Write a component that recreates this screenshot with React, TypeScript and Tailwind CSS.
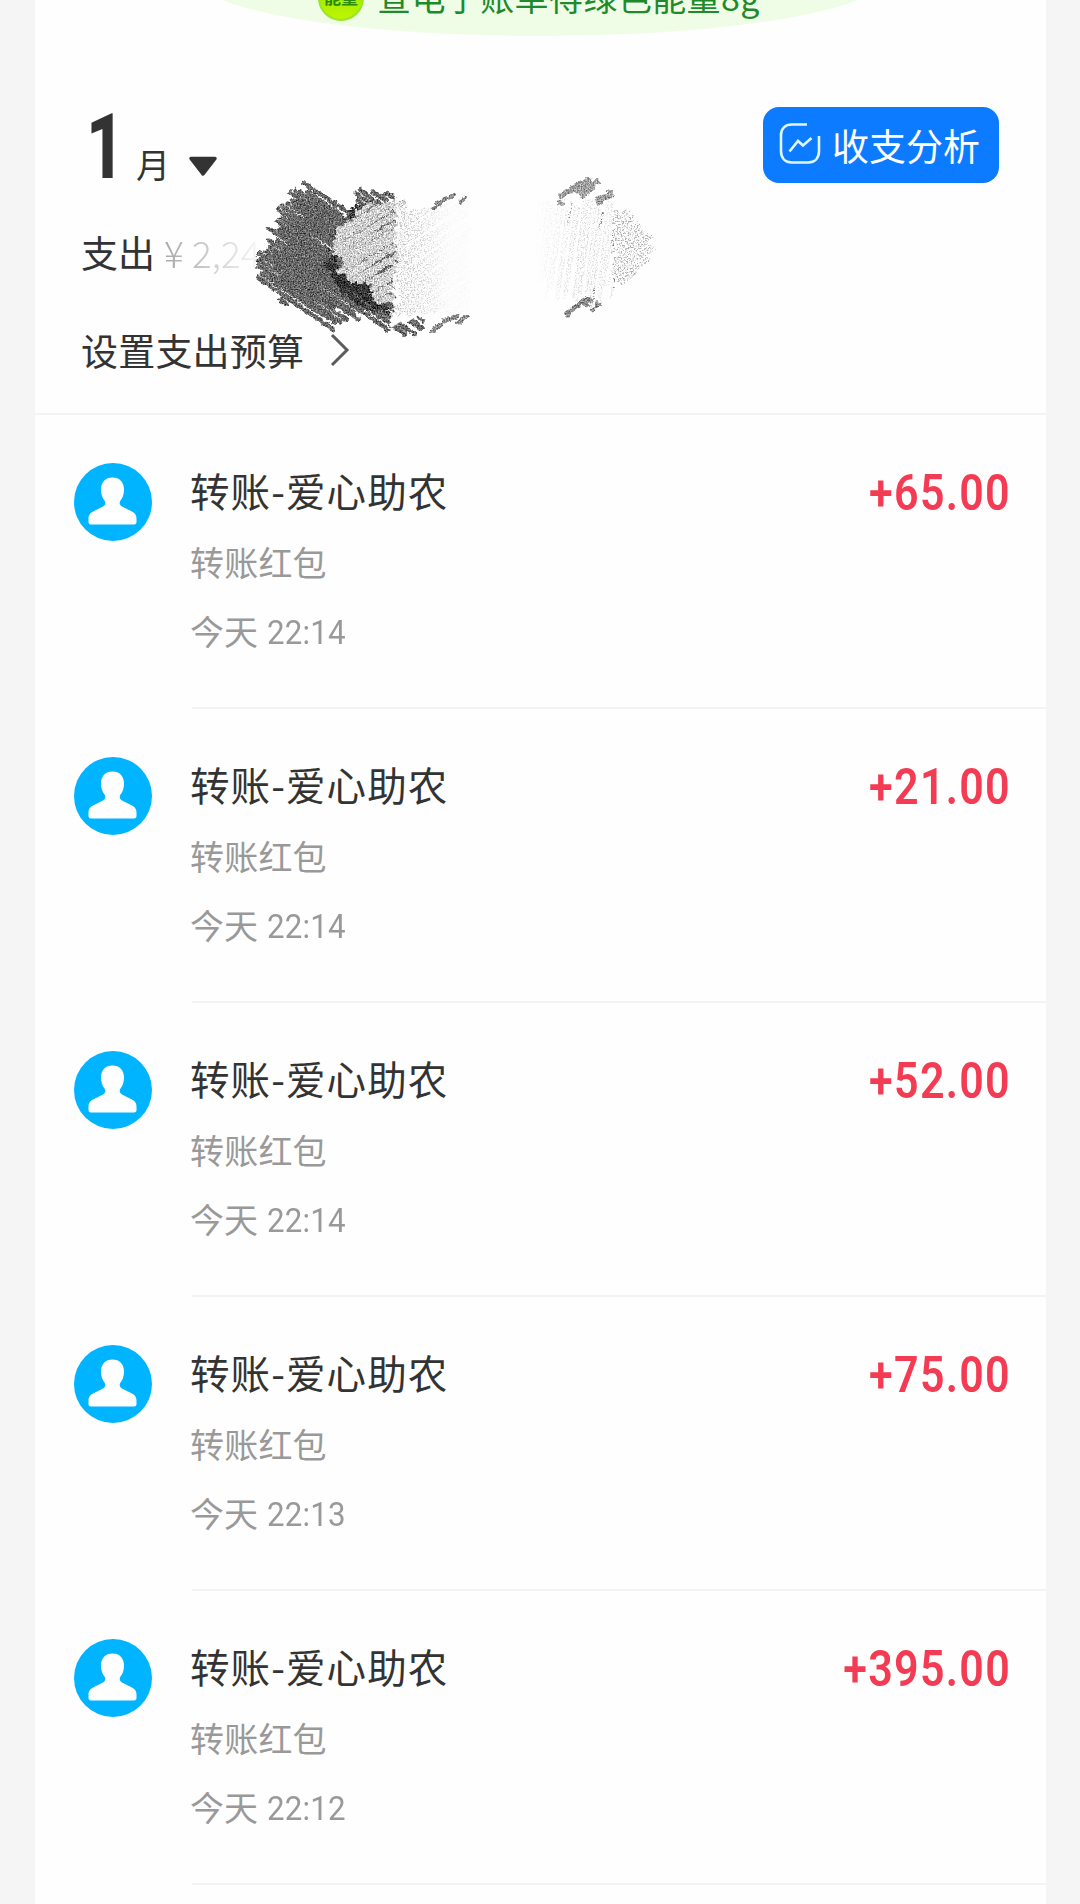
type Point = [number, number];

const bills = [
    { id: 1, title: "转账-爱心助农", kind: "转账红包", time: "22:14", amount: "+65.00" },
    { id: 2, title: "转账-爱心助农", kind: "转账红包", time: "22:14", amount: "+21.00" },
    { id: 3, title: "转账-爱心助农", kind: "转账红包", time: "22:14", amount: "+52.00" },
    { id: 4, title: "转账-爱心助农", kind: "转账红包", time: "22:13", amount: "+75.00" },
    { id: 5, title: "转账-爱心助农", kind: "转账红包", time: "22:12", amount: "+395.00" },
];

const random = (seed: number) => () => {
    seed = (seed * 16807) % 2147483647;
    return seed / 2147483647;
};

// fills a polygon with rough parallel strokes at the given angle
const hatch = (points: Point[], angle: number, gap: number, rough: number, seed: number) => {
    const rnd = random(seed * 7919);
    const a = (angle * Math.PI) / 180;
    const cos = Math.cos(a);
    const sin = Math.sin(a);
    const turned = points.map(([x, y]): Point => [x * cos + y * sin, y * cos - x * sin]);
    const ys = turned.map((p) => p[1]);
    let d = "";
    for (let v = Math.min(...ys) + 1; v < Math.max(...ys); v += gap) {
        const hits: number[] = [];
        turned.forEach((p, i) => {
            const q = turned[(i + 1) % turned.length];
            if (p[1] > v !== q[1] > v) {
                hits.push(p[0] + ((v - p[1]) / (q[1] - p[1])) * (q[0] - p[0]));
            }
        });
        hits.sort((m, n) => m - n);
        for (let i = 0; i + 1 < hits.length; i += 2) {
            const from = hits[i] + (rnd() - 0.3) * rough;
            const to = hits[i + 1] - (rnd() - 0.3) * rough;
            if (to <= from) continue;
            const w = v + (rnd() - 0.5) * 5;
            const line = [from * cos - v * sin, from * sin + v * cos, to * cos - w * sin, to * sin + w * cos];
            const [x1, y1, x2, y2] = line.map((n) => n.toFixed(1));
            d += `M${x1} ${y1}L${x2} ${y2}`;
        }
    }
    return d;
};

const darkArea: Point[] = [
    [306, 185], [322, 189], [350, 209], [356, 206], [354, 197], [374, 187], [390, 196], [400, 230],
    [410, 300], [425, 318], [420, 330], [404, 336], [378, 323], [362, 311], [350, 326], [330, 328],
    [290, 306], [257, 281], [256, 267], [262, 251], [271, 230], [281, 207], [290, 195],
];
const darkCore: Point[] = [
    [300, 203], [318, 204], [345, 222], [380, 205], [395, 240], [400, 310], [375, 312], [350, 305],
    [325, 308], [285, 286], [276, 268], [282, 235],
];
const shadeArea: Point[] = [
    [345, 212], [366, 202], [372, 202], [350, 224], [336, 243], [334, 262], [350, 280],
    [376, 290], [388, 305], [388, 316], [362, 308], [338, 288], [324, 262], [336, 236],
];
const lightArea: Point[] = [
    [388, 197], [402, 203], [400, 310], [388, 324], [390, 311], [371, 300], [370, 288], [356, 284],
    [340, 273], [337, 262], [327, 256], [334, 236], [345, 222], [365, 208],
];
const whiteArea: Point[] = [
    [396, 202], [416, 211], [438, 205], [458, 192], [470, 200], [470, 310], [440, 318], [420, 316],
    [405, 321], [390, 328], [393, 310],
];
const whiteGrain: Point[] = [
    [396, 202], [416, 211], [436, 204], [452, 196], [468, 204], [470, 310], [455, 322], [440, 312],
    [418, 318], [396, 315],
];
const midArea: Point[] = [[530, 207], [560, 200], [590, 193], [612, 205], [614, 292], [590, 307], [562, 297], [535, 290]];
const rightArea: Point[] = [
    [612, 208], [630, 209], [637, 224], [645, 225], [655, 245], [653, 260], [635, 276], [613, 288],
];

const Scribble = () => (
    <svg
        className="pointer-events-none absolute top-[165px] left-[165px]"
        width="460"
        height="180"
        viewBox="200 165 460 180"
        fill="none"
    >
        <defs>
            <filter id="grain" x="200" y="165" width="460" height="180" filterUnits="userSpaceOnUse" colorInterpolationFilters="sRGB">
                <feTurbulence type="fractalNoise" baseFrequency="0.75" numOctaves="2" seed="4" result="noise" />
                <feColorMatrix in="noise" values="1.2 0 0 0 -0.1  1.2 0 0 0 -0.1  1.2 0 0 0 -0.1  0 0 0 0 1" result="grey" />
                <feTurbulence type="fractalNoise" baseFrequency="0.2" numOctaves="3" seed="2" result="waves" />
                <feDisplacementMap in="SourceGraphic" in2="waves" scale="6" xChannelSelector="R" yChannelSelector="G" result="rough" />
                <feComposite in="rough" in2="grey" operator="arithmetic" k2="1" k3="0.8" k4="-0.4" result="mixed" />
                <feComposite in="mixed" in2="rough" operator="in" />
            </filter>
            <filter id="dust" x="200" y="165" width="460" height="180" filterUnits="userSpaceOnUse" colorInterpolationFilters="sRGB">
                <feTurbulence type="fractalNoise" baseFrequency="0.7" numOctaves="2" seed="9" result="noise" />
                <feColorMatrix in="noise" values="0 0 0 0 0  0 0 0 0 0  0 0 0 0 0  0 0 0 5 -2.4" result="specks" />
                <feComposite in="SourceGraphic" in2="specks" operator="in" />
            </filter>
            <linearGradient id="fadeRight" x1="396" x2="450" y1="0" y2="0" gradientUnits="userSpaceOnUse">
                <stop offset="0" stopColor="#b8b8b8" />
                <stop offset="0.6" stopColor="#b8b8b8" stopOpacity="0.5" />
                <stop offset="1" stopColor="#b8b8b8" stopOpacity="0.08" />
            </linearGradient>
            <linearGradient id="fadeLeft" x1="535" x2="612" y1="0" y2="0" gradientUnits="userSpaceOnUse">
                <stop offset="0" stopColor="#c4c4c4" stopOpacity="0.02" />
                <stop offset="0.6" stopColor="#c4c4c4" stopOpacity="0.7" />
                <stop offset="1" stopColor="#c4c4c4" stopOpacity="0.5" />
            </linearGradient>
        </defs>
        <g filter="url(#grain)">
            <path d={hatch(darkCore, 34, 3.2, 18, 3)} stroke="#5c5c5c" strokeWidth="3.6" strokeLinecap="round" />
            <path d={hatch(darkArea, 34, 5.2, 16, 11)} stroke="#686868" strokeWidth="4.6" strokeLinecap="round" />
            <path d={hatch(shadeArea, 38, 3, 10, 5)} stroke="#353535" strokeWidth="3.4" />
            <path d={hatch(lightArea, -30, 4.6, 15, 21)} stroke="#d2d2d2" strokeWidth="4.6" />
        </g>
        <path d={hatch(whiteArea, -32, 3.6, 6, 8)} stroke="#fdfdfd" strokeWidth="4.4" />
        <g filter="url(#dust)">
            <path d={hatch(whiteGrain, -34, 3.6, 9, 31)} stroke="url(#fadeRight)" strokeWidth="3.2" />
            <path d={hatch(midArea, 97, 4, 22, 17)} stroke="url(#fadeLeft)" strokeWidth="3" />
            <path d={hatch(rightArea, -32, 4, 8, 15)} stroke="#acacac" strokeWidth="4" />
            <path d="M572 201l-4 22M603 212l-4 18M613 230v16M614 278v10M594 288v14" stroke="#6d6d6d" strokeWidth="2" />
        </g>
        <g filter="url(#grain)" stroke="#8a8a8a" strokeLinecap="round">
            <path d="M434 208l10-8 10-5M460 202l6-5M433 331l10-9 15-6M458 323l9-7" strokeWidth="4" />
            <path d="M560 196l16-9 12-6M577 191l20-9M582 195l10-6M598 199l8-2M600 202l11-9M561 203l1 2" strokeWidth="5.5" stroke="#a0a0a0" />
            <path d="M567 315l10-9 11-8M585 304l5-3M592 310l6-5" strokeWidth="4.5" />
        </g>
    </svg>
);

const Avatar = () => (
    <svg className="shrink-0" width="80" height="80" viewBox="0 0 80 80">
        <circle cx="40" cy="40" r="39" fill="#00b4ff" />
        <path
            fill="#fff"
            d="M39.5 15.5c7 0 11.5 4.5 11.5 12 0 5-1.500 8.500-3.500 11-1.500 2-1 4.500 1.500 6l9 4.500c4 2 5.500 4 5.500 8v3c0 1.500-.8 2.500-2.500 2.500h-43c-1.700 0-2.500-1-2.500-2.500v-3c0-4 1.500-6 5.500-8l9-4.500c2.500-1.500 3-4 1.500-6-2-2.500-3.500-6-3.500-11 0-7.500 4.500-12 11.500-12z"
        />
    </svg>
);

const Banner = () => (
    <div className="-mt-[84px] ml-[158px] flex h-[120px] w-[694px] items-end rounded-[50%] bg-[#f0fde6] pl-[125px] whitespace-nowrap">
        <div className="mb-[15px] flex h-[46px] w-[46px] items-end justify-center rounded-full border-2 border-[#98e62c] bg-linear-to-b from-[#8fe000] to-[#bdf600] pb-[13px] text-[17px] leading-[18px] font-bold text-[#2c8a0c]">
            能量
        </div>
        <div className="mb-[21px] ml-[13px] text-[34px] leading-[36px] tracking-[0.4px] text-[#1f8a2c]">
            查电子账单得绿色能量8g
        </div>
    </div>
);

const Header = () => (
    <div className="flex h-[377px] flex-col pl-[46px] text-[#333]">
        <div className="flex h-[158px] items-start justify-between pr-[47px]">
            <div className="flex items-end pt-[67px]">
                <span className="w-[54px] origin-left translate-x-[5px] scale-x-[0.74] font-['Roboto'] text-[90px] leading-[90px] font-extrabold">1</span>
                <span className="mb-[9px] ml-[1px] text-[34px] leading-[40px]">月</span>
                <svg className="mb-[16px] ml-[18px]" width="30" height="21" viewBox="0 0 30 21">
                    <path d="M3 2.500h24L15 18z" fill="#333" stroke="#333" strokeWidth="3.500" strokeLinejoin="round" />
                </svg>
            </div>
            <button className="mt-[71px] flex h-[76px] w-[236px] items-center rounded-[16px] bg-[#0d7bff] pl-[16px] text-white">
                <svg className="-mt-[2px]" width="42" height="42" viewBox="0 0 42 42" fill="none" stroke="#dff6ff" strokeWidth="2.600">
                    <path d="M28 1.500H13C6 1.500 2 5.500 2 12v16c0 7 4 11.500 11 11.500h16c7 0 11-4.500 11-11.500V13" />
                    <path d="M10.500 28.500l8.500-10.500 5 4.500 8.500-7.500" />
                </svg>
                <span className="ml-[11px] text-[37px] leading-[44px]">收支分析</span>
            </button>
        </div>
        <div className="mt-[36px] flex h-[44px] items-center">
            <span className="text-[37px] leading-[44px]">支出</span>
            <span className="ml-[9px] bg-linear-to-r from-[#a8a8a8] to-[#f8f8f8] bg-clip-text text-[37px] leading-[44px] font-light text-transparent">
                ¥ 2,24
            </span>
        </div>
        <div className="mt-[54px] flex h-[44px] items-center">
            <span className="text-[37px] leading-[44px] tracking-[0.2px]">设置支出预算</span>
            <svg className="ml-[26px]" width="20" height="34" viewBox="0 0 20 34" fill="none">
                <path d="M2 2l15 15L2 32" stroke="#5c5c5c" strokeWidth="3" />
            </svg>
        </div>
    </div>
);

const BillRow = ({ bill }: { bill: (typeof bills)[number] }) => (
    <div className="flex h-[294px] pl-[38px]">
        <div className="w-[119px] pt-[47px]">
            <Avatar />
        </div>
        <div className="flex flex-1 justify-between border-b-2 border-[#f3f3f3] pr-[35px]">
            <div className="-ml-[2px] pt-[51px]">
                <div className="text-[39.500px] leading-[48px] tracking-[1.100px] text-[#333]">{bill.title}</div>
                <div className="mt-[26px] text-[34px] leading-[44px] tracking-[0.200px] text-[#999]">{bill.kind}</div>
                <div className="mt-[25px] flex text-[34px] leading-[44px] text-[#999]">
                    今天
                    <span className="mt-[1px] ml-[9px] origin-left scale-x-[0.92] font-['Roboto'] tracking-[0.200px]">{bill.time}</span>
                </div>
            </div>
            <div className="origin-right scale-x-[0.86] pt-[48px] font-['Roboto'] text-[50px] leading-[60px] font-semibold tracking-[1.500px] text-[#f33c54]">
                {bill.amount}
            </div>
        </div>
    </div>
);

const App = () => {
    return (
        <div className="h-[1904px] overflow-hidden bg-[#f5f5f5] pr-[34px] pl-[35px] font-['Noto_Sans_CJK_SC',sans-serif]">
            <div className="relative flex h-full flex-col bg-[#fefefe]">
                <Banner />
                <Header />
                <Scribble />
                <div className="border-t-2 border-[#f3f3f3]">
                    {bills.map((bill) => (
                        <BillRow key={bill.id} bill={bill} />
                    ))}
                </div>
            </div>
        </div>
    );
};

export default App;
